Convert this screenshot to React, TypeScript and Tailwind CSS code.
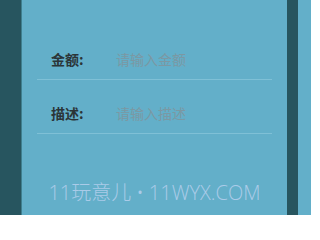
export default function App() {
  return (
    <div className="flex h-[215px] w-[311px] overflow-hidden bg-[#63afc9] font-['Noto_Sans_CJK_SC','Noto_Sans',sans-serif]">
      {/* left shade */}
      <div className="w-[21px] shrink-0 bg-[#27555f]" />

      {/* form panel */}
      <div className="flex w-[266px] shrink-0 flex-col border-l border-[#3f7f8f] px-[15px] pt-[26px]">
        <FormRow label="金额:" placeholder="请输入金额" />
        <FormRow label="描述:" placeholder="请输入描述" />

        <div className="mt-[49px] flex justify-center font-['Open_Sans','Noto_Sans_CJK_SC',sans-serif] text-[20px] leading-none font-light whitespace-nowrap text-[#aacbe8]">
          <span>11玩意儿</span>
          <span className="mx-[5px]">•</span>
          <span>11WYX.COM</span>
        </div>
      </div>

      {/* right shade */}
      <div className="w-[11px] shrink-0 bg-[#27555f]" />
      <div className="flex-1 bg-[#63afc9]" />
    </div>
  );
}

function FormRow({ label, placeholder }: { label: string; placeholder: string }) {
  return (
    <div className="flex h-[54px] items-start border-b border-[#7fc0d6] pl-[14px] pt-[23px]">
      <span className="w-[65px] text-[14px] leading-5 font-bold text-[#2b3538]">
        {label}
      </span>
      <span className="w-[150px] text-[14px] leading-5 text-[#7b98a3]">
        {placeholder}
      </span>
    </div>
  );
}
